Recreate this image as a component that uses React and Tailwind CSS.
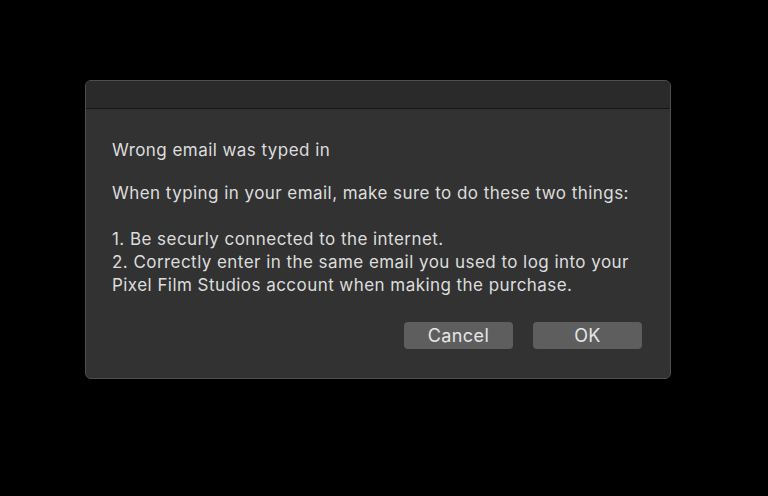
import React from "react";

const App = () => {
  return (
    <div className="h-[496px] w-[768px] bg-black pt-[80px] pl-[85px]" style={{ fontFamily: "Inter, 'Liberation Sans', sans-serif" }}>
      <div className="flex h-[299px] w-[586px] flex-col overflow-hidden rounded-[6px] border border-[#4e4e4e] bg-[#323232]">
        {/* title bar */}
        <div className="h-[28px] border-b border-[#171717] bg-[#2a2a2a]"></div>

        <div className="flex flex-1 flex-col pl-[26px] pr-[28px] pt-[30px]">
          <div className="text-[17px] leading-[23px] tracking-[0.45px] text-[#dddddd]">
            <p>Wrong email was typed in</p>
            <p className="mt-[20px]">When typing in your email, make sure to do these two things:</p>
            <p className="mt-[23px]">1. Be securly connected to the internet.</p>
            <p>2. Correctly enter in the same email you used to log into your</p>
            <p>Pixel Film Studios account when making the purchase.</p>
          </div>

          <div className="mt-[25px] flex justify-end gap-[20px]">
            <button
              type="button"
              className="h-[27px] w-[109px] rounded-[4px] bg-[#5e5e5e] pt-[1px] text-[18px] leading-none tracking-[0.4px] text-[#e6e6e6]"
            >
              Cancel
            </button>
            <button
              type="button"
              className="h-[27px] w-[109px] rounded-[4px] bg-[#5e5e5e] pt-[1px] text-[18px] leading-none tracking-[0.4px] text-[#e6e6e6]"
            >
              OK
            </button>
          </div>
        </div>
      </div>
    </div>
  );
};

export default App;
